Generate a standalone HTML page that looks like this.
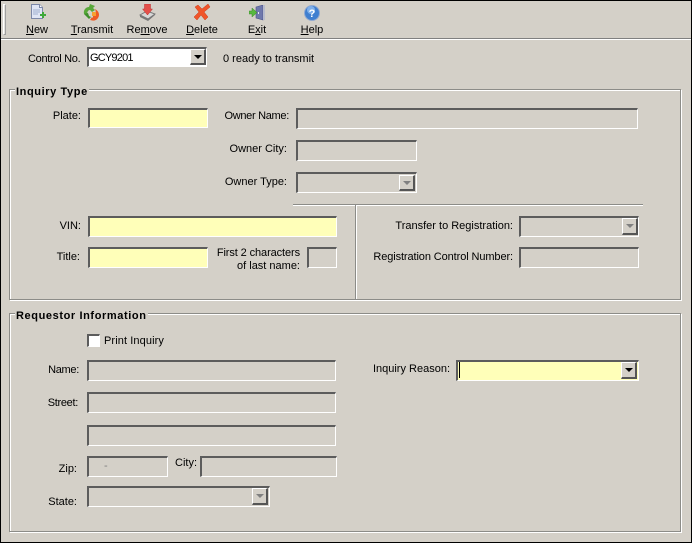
<!DOCTYPE html>
<html><head><meta charset="utf-8"><style>
html,body{margin:0;padding:0;background:#d4d0c8}
#w{position:relative;width:692px;height:543px;overflow:hidden;background:#d4d0c8;font:11px/14px "Liberation Sans",sans-serif;color:#000}
#w div,#w span.a{position:absolute;box-sizing:border-box}
.t{position:absolute;white-space:nowrap;line-height:14px;margin-top:1px}
.r{text-align:right}
.n{letter-spacing:-.3px}
.c{text-align:center;width:60px}
.f{border:solid;border-width:2px 1px 1px 2px;border-color:#5c5c5c #fff #fff #5c5c5c;background:#d4d0c8}
.y{background:#ffffb9}
.b{width:16px;border:solid;border-width:1px 2px 2px 1px;border-color:#fff #555 #555 #fff;background:#d4d0c8}
.b:after{content:"";position:absolute;left:3px;top:5px;border:4px solid transparent;border-top:4px solid #000;border-bottom:0}
.d:after{border-top-color:#808080}
.g{border:1px solid #8c8c88;box-shadow:1px 1px 0 #fff,inset 1px 1px 0 #fff}
.l{font-weight:bold;background:#d4d0c8;padding:0 1px;position:absolute;white-space:nowrap;line-height:14px;letter-spacing:.6px;margin-top:1px}
svg{position:absolute}
</style></head><body><div id="w">
<div style="left:0;top:0;width:692px;height:1px;background:#000"></div>
<div style="left:0;top:0;width:1px;height:543px;background:#000"></div>
<div style="left:691px;top:0;width:1px;height:543px;background:#000"></div>
<div style="left:0;top:542px;width:692px;height:1px;background:#000"></div>
<div style="left:3px;top:4px;width:3px;height:31px;border:1px solid;border-color:#fff #a0a0a0 #a0a0a0 #fff;background:#e4e2dc"></div>
<div style="left:1px;top:38px;width:690px;height:1px;background:#808080"></div>
<div style="left:1px;top:39px;width:690px;height:1px;background:#fff"></div>

<svg style="left:30px;top:4px" width="16" height="16" viewBox="0 0 16 16"><path d="M1.500.5h8l3 3v11h-11z" fill="#dfe5f5" stroke="#7c88a8"/><path d="M9.500.5v3h3" fill="#fff" stroke="#7c88a8"/><path d="M3 6h7M3 8h7M3 10h5" stroke="#9fb0d0"/><path d="M10 10h2V8h2v2h2v2h-2v2h-2v-2h-2z" fill="#3fa83a"/></svg>
<svg style="left:83px;top:4px" width="17" height="17" viewBox="0 0 17 17"><path d="M7 0l5 2-2 2 2 2-3 2-2-2C5 6 4 8 4 11l-3-1C0 6 3 3 6 3z" fill="#58a83a"/><path d="M1 10l5 5 2-2-2-1-1-3z" fill="#3f8f2c"/><path d="M12 5c4 2 5 6 3 9-2 3-5 3-8 2l2-3 1 1 0-4 2 1c1-2 1-3 0-6z" fill="#ee5a24"/><path d="M9 8h4v4H9z" fill="#f6a030"/></svg>
<svg style="left:139px;top:4px" width="17" height="17" viewBox="0 0 17 17"><path d="M1 11l7-4 8 3-7 5z" fill="#d8d8d8" stroke="#777"/><path d="M1 11v2l8 4 7-6v-1l-7 5z" fill="#777"/><path d="M5.500 0h6v5h2l-5 6-5-6h2z" fill="#e4504a" stroke="#b83030" stroke-width=".5"/></svg>
<svg style="left:194px;top:4px" width="17" height="16" viewBox="0 0 17 16"><path d="M1 3l3-2 4 4 6-5 2 3-6 5 4 5-3 3-4-5-4 5-3-3 5-5z" fill="#f0552a" stroke="#c83a18" stroke-width=".5"/></svg>
<svg style="left:249px;top:5px" width="17" height="16" viewBox="0 0 17 16"><path d="M7 2l7-2v15l-7-2z" fill="#6f78ac" stroke="#4a5288" stroke-width=".6"/><path d="M14 0h2v15h-2z" fill="#b8bccc"/><path d="M9 7h1v2H9z" fill="#e8e8f0"/><path d="M0 6h3V3l5 4.500L3 12V9H0z" fill="#58b840" stroke="#388828" stroke-width=".5"/></svg>
<svg style="left:304px;top:5px" width="16" height="16" viewBox="0 0 16 16"><circle cx="8" cy="8" r="7.500" fill="#3f7fd0" stroke="#8fa8d0"/><circle cx="7" cy="5" r="4" fill="#7fb0ea"/><text x="8" y="12" font-family="Liberation Sans" font-weight="bold" font-size="11" fill="#fff" text-anchor="middle">?</text></svg>

<span class="t c" style="left:7px;top:22px"><u>N</u>ew</span>
<span class="t c" style="left:62px;top:22px"><u>T</u>ransmit</span>
<span class="t c" style="left:117px;top:22px">Re<u>m</u>ove</span>
<span class="t c" style="left:172px;top:22px"><u>D</u>elete</span>
<span class="t c" style="left:227px;top:22px">E<u>x</u>it</span>
<span class="t c" style="left:282px;top:22px"><u>H</u>elp</span>

<span class="t n" style="left:28px;top:51px">Control No.</span>
<div class="f" style="left:87px;top:47px;width:120px;height:20px;background:#fff"></div>
<span class="t" style="left:90px;top:50px;letter-spacing:-.8px">GCY9201</span>
<div class="b" style="left:190px;top:49px;height:16px"></div>
<span class="t" style="left:223px;top:51px">0 ready to transmit</span>

<div class="g" style="left:9px;top:89px;width:672px;height:211px"></div>
<span class="l" style="left:15px;top:84px">Inquiry Type</span>

<span class="t r" style="right:611px;top:108px">Plate:</span>
<div class="f y" style="left:88px;top:108px;width:120px;height:20px"></div>
<span class="t r n" style="right:403px;top:108px">Owner Name:</span>
<div class="f" style="left:296px;top:108px;width:342px;height:21px"></div>
<span class="t r" style="right:405px;top:141px">Owner City:</span>
<div class="f" style="left:296px;top:140px;width:121px;height:21px"></div>
<span class="t r" style="right:405px;top:174px">Owner Type:</span>
<div class="f" style="left:296px;top:172px;width:121px;height:21px"></div>
<div class="b d" style="left:399px;top:175px;height:16px"></div>

<div style="left:293px;top:204px;width:350px;height:1px;background:#8c8c88"></div>
<div style="left:293px;top:205px;width:350px;height:1px;background:#fff"></div>
<div style="left:355px;top:205px;width:1px;height:94px;background:#8c8c88"></div>
<div style="left:356px;top:206px;width:1px;height:93px;background:#fff"></div>

<span class="t r" style="right:611px;top:218px">VIN:</span>
<div class="f y" style="left:88px;top:216px;width:249px;height:21px"></div>
<span class="t r" style="right:612px;top:249px">Title:</span>
<div class="f y" style="left:88px;top:247px;width:120px;height:21px"></div>
<span class="t r" style="right:392px;top:245px;letter-spacing:-.1px">First 2 characters</span>
<span class="t r" style="right:392px;top:258px">of last name:</span>
<div class="f" style="left:307px;top:247px;width:30px;height:21px"></div>
<span class="t r" style="right:179px;top:218px">Transfer to Registration:</span>
<div class="f" style="left:519px;top:216px;width:120px;height:21px"></div>
<div class="b d" style="left:622px;top:218px;height:17px"></div>
<span class="t r" style="right:179px;top:249px;letter-spacing:-.1px">Registration Control Number:</span>
<div class="f" style="left:519px;top:247px;width:120px;height:21px"></div>

<div class="g" style="left:9px;top:313px;width:672px;height:219px"></div>
<span class="l" style="left:15px;top:308px">Requestor Information</span>

<div class="f" style="left:87px;top:334px;width:13px;height:13px;background:#fff"></div>
<span class="t" style="left:104px;top:333px;letter-spacing:.1px">Print Inquiry</span>
<span class="t r n" style="right:613px;top:362px">Name:</span>
<div class="f" style="left:87px;top:360px;width:249px;height:21px"></div>
<span class="t r n" style="right:614px;top:395px">Street:</span>
<div class="f" style="left:87px;top:392px;width:249px;height:21px"></div>
<div class="f" style="left:87px;top:425px;width:249px;height:21px"></div>
<span class="t r" style="right:615px;top:461px">Zip:</span>
<div class="f" style="left:87px;top:456px;width:81px;height:21px"></div>
<span class="t" style="left:104px;top:458px;color:#808080">-</span>
<span class="t" style="left:175px;top:455px">City:</span>
<div class="f" style="left:200px;top:456px;width:137px;height:21px"></div>
<span class="t r" style="right:615px;top:494px">State:</span>
<div class="f" style="left:87px;top:486px;width:183px;height:21px"></div>
<div class="b d" style="left:252px;top:488px;height:17px"></div>
<span class="t r" style="right:242px;top:361px">Inquiry Reason:</span>
<div class="f y" style="left:456px;top:360px;width:183px;height:21px"></div>
<div style="left:459px;top:362px;width:1px;height:16px;background:#000"></div>
<div class="b" style="left:621px;top:362px;height:17px"></div>
</div></body></html>
